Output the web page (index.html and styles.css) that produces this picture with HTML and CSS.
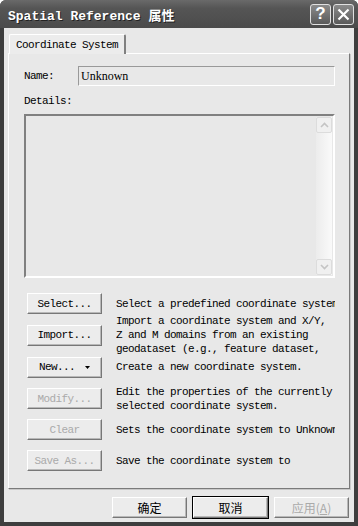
FILE: index.html
```html
<!DOCTYPE html>
<html lang="zh">
<head>
    <meta charset="UTF-8">
    <title>Spatial Reference 属性</title>
    <link rel="stylesheet" href="styles.css">
</head>
<body>
    <div class="window">
        <div class="titlebar">
            <span class="title">Spatial Reference 属性</span>
            <div class="caption-btns">
                <span class="cap-btn">?</span>
                <span class="cap-btn">
                    <svg width="13" height="13" viewBox="0 0 13 13"><path d="M1.5 1.5 L11.5 11.5 M11.5 1.5 L1.5 11.5" stroke="#fff" stroke-width="2.2" fill="none"/></svg>
                </span>
            </div>
        </div>

        <div class="client">
            <div class="tabs">
                <div class="tab">Coordinate System</div>
            </div>
            <div class="panel">
                <div class="name-row">
                    <span class="label">Name:</span>
                    <div class="field">Unknown</div>
                </div>
                <div class="label details-label">Details:</div>
                <div class="details-box">
                    <div class="scrollbar">
                        <span class="arrow">
                            <svg width="9" height="6" viewBox="0 0 9 6"><path d="M1 5 L4.5 1.5 L8 5" stroke="#c4c4c4" stroke-width="1.6" fill="none"/></svg>
                        </span>
                        <span class="arrow">
                            <svg width="9" height="6" viewBox="0 0 9 6"><path d="M1 1 L4.5 4.5 L8 1" stroke="#c4c4c4" stroke-width="1.6" fill="none"/></svg>
                        </span>
                    </div>
                </div>

                <div class="actions">
                    <div class="action">
                        <button class="btn">Select...</button>
                        <div class="desc">Select a predefined coordinate system</div>
                    </div>
                    <div class="action tall">
                        <button class="btn">Import...</button>
                        <div class="desc">Import a coordinate system and X/Y,<br>Z and M domains from an existing<br>geodataset (e.g., feature dataset,</div>
                    </div>
                    <div class="action tall">
                        <button class="btn btn-menu">New...<svg class="caret" width="5" height="3" viewBox="0 0 5 3"><path d="M0 0 H5 L2.5 3 Z" fill="#000"/></svg></button>
                        <div class="desc">Create a new coordinate system.</div>
                    </div>
                    <div class="action">
                        <button class="btn" disabled>Modify...</button>
                        <div class="desc">Edit the properties of the currently<br>selected coordinate system.</div>
                    </div>
                    <div class="action">
                        <button class="btn" disabled>Clear</button>
                        <div class="desc">Sets the coordinate system to Unknown.</div>
                    </div>
                    <div class="action">
                        <button class="btn" disabled>Save As...</button>
                        <div class="desc">Save the coordinate system to</div>
                    </div>
                </div>
            </div>

            <div class="footer">
                <button class="btn dlg-btn">确定</button>
                <button class="btn dlg-btn default">取消</button>
                <button class="btn dlg-btn" disabled>应用(<u>A</u>)</button>
            </div>
        </div>
    </div>
</body>
</html>
```

FILE: styles.css
```css
body {
    margin: 0;
    background: #fff;
}
.window {
    width: 358px;
    height: 526px;
    display: flex;
    flex-direction: column;
    background: #3e3e3e;
    border-radius: 6px 6px 0 0;
    box-sizing: border-box;
}
.titlebar {
    height: 28px;
    display: flex;
    align-items: center;
    justify-content: space-between;
    padding: 0 4px 0 8px;
    background: linear-gradient(to bottom, #6a6a6a 0%, #555 30%, #4b4b4b 100%);
    border-radius: 6px 6px 0 0;
}
.title {
    font-family: "Liberation Mono", "Noto Sans CJK SC", monospace;
    font-size: 13px;
    font-weight: bold;
    color: #fff;
    text-shadow: 1px 1px 0 #222;
}
.caption-btns {
    display: flex;
    gap: 2px;
}
.cap-btn {
    width: 19px;
    height: 19px;
    border: 1px solid #e0e0e0;
    border-radius: 3px;
    background: linear-gradient(to bottom, #8a8a8a, #5a5a5a);
    display: flex;
    align-items: center;
    justify-content: center;
    color: #fff;
    font-family: "Liberation Sans", sans-serif;
    font-weight: bold;
    font-size: 17px;
}
.client {
    flex: 1;
    margin: 0 4px 4px;
    background: #e8e8e8;
    padding: 5px 4px 4px 4px;
    display: flex;
    flex-direction: column;
    font-family: "Liberation Mono", "Noto Sans CJK SC", monospace;
    font-size: 11px;
    letter-spacing: -0.6px;
    color: #000;
}
.tabs {
    display: flex;
    padding-left: 1px;
}
.tab {
    height: 20px;
    line-height: 20px;
    padding: 0 6px 0 6px;
    background: #ececec;
    border: 1px solid #fff;
    border-right: 2px solid #808080;
    border-bottom: none;
    border-radius: 2px 2px 0 0;
    box-sizing: border-box;
    position: relative;
    top: 1px;
}
.panel {
    flex: 1;
    border: 1px solid;
    border-color: #fff #7a7a7a #7a7a7a #fff;
    box-shadow: 1px 1px 0 #c8c8c8;
    padding: 12px 14px 0 15px;
    display: flex;
    flex-direction: column;
}
.name-row {
    display: flex;
    align-items: center;
}
.label {
    width: 54px;
    line-height: 14px;
}
.field {
    flex: 1;
    height: 20px;
    line-height: 19px;
    padding-left: 2px;
    box-sizing: border-box;
    border: 1px solid;
    border-color: #999 #fff #fff #999;
    font-family: "Liberation Serif", serif;
    font-size: 12px;
    letter-spacing: 0;
}
.details-label {
    margin-top: 8px;
}
.details-box {
    margin-top: 6px;
    height: 164px;
    box-sizing: border-box;
    border: 2px solid;
    border-color: #808080 #fff #fff #808080;
    display: flex;
    justify-content: flex-end;
    padding: 1px;
}
.scrollbar {
    width: 16px;
    display: flex;
    flex-direction: column;
    justify-content: space-between;
    background: linear-gradient(to right, #ececec, #fafafa);
}
.arrow {
    width: 16px;
    height: 16px;
    box-sizing: border-box;
    border: 1px solid #dcdcdc;
    border-radius: 2px;
    background: #f0f0f0;
    display: flex;
    align-items: center;
    justify-content: center;
}
.actions {
    margin-top: 10px;
    display: flex;
    flex-direction: column;
}
.action {
    height: 31px;
    display: flex;
    align-items: center;
    gap: 14px;
    padding-left: 3px;
}
.action.tall {
    height: 32px;
}
.btn {
    width: 75px;
    height: 21px;
    padding: 0;
    background: #ececec;
    border: 1px solid;
    border-color: #fff #777 #777 #fff;
    box-shadow: inset -1px -1px 0 #b8b8b8;
    font-family: "Liberation Mono", "Noto Sans CJK SC", monospace;
    font-size: 11px;
    letter-spacing: -0.6px;
    color: #000;
    flex-shrink: 0;
}
.btn:disabled {
    color: #aaa;
}
.caret {
    margin-left: 10px;
    vertical-align: middle;
}
.desc {
    width: 221px;
    line-height: 14px;
    white-space: nowrap;
    overflow: hidden;
}
.footer {
    height: 21px;
    margin-top: 8px;
    display: flex;
    justify-content: flex-end;
    gap: 6px;
    padding-right: 1px;
}
.dlg-btn {
    font-family: "Noto Sans CJK SC", sans-serif;
    font-size: 12px;
    letter-spacing: 0;
    line-height: 1;
}
.default {
    outline: 1px solid #000;
}
```
